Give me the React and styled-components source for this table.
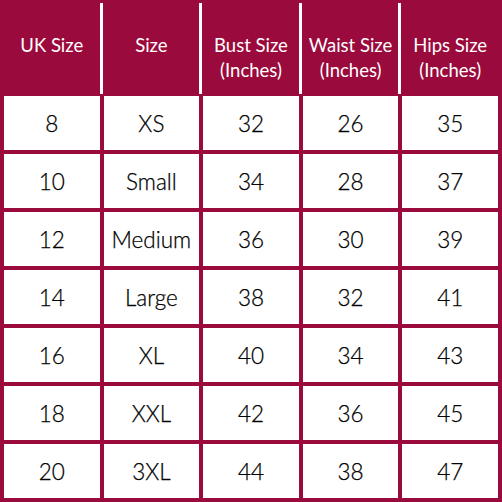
import React from "react";
import styled, { createGlobalStyle } from "styled-components";

const GlobalStyle = createGlobalStyle`
    html, body {
        margin: 0;
        padding: 0;
        background: #ffffff;
    }
    body {
        font-family: "Lato", "Open Sans", "Liberation Sans", sans-serif;
    }
`;

const Table = styled.div`
    width: 502px;
    height: 502px;
    box-sizing: border-box;
    background-color: #9b0a3c;
    padding: 0 4px 4px 4px;
    display: grid;
    grid-template-columns: repeat(5, 1fr);
    grid-template-rows: 92px repeat(7, 54px);
    gap: 4px;
`;

const HeadCell = styled.div`
    position: relative;
    color: #ffffff;
    font-size: 18.5px;
    line-height: 25px;
    text-align: center;
    padding-top: 33px;
    white-space: nowrap;

    &:not(:first-child)::before {
        content: "";
        position: absolute;
        left: -4px;
        top: 3px;
        bottom: -2px;
        width: 3px;
        background-color: #ffffff;
    }
`;

const Cell = styled.div`
    background-color: #ffffff;
    color: #000000;
    font-size: 22.5px;
    font-weight: 300;
    -webkit-text-stroke: 0.25px #000000;
    display: flex;
    align-items: center;
    justify-content: center;
`;

const headers = [
    ["UK Size"],
    ["Size"],
    ["Bust Size", "(Inches)"],
    ["Waist Size", "(Inches)"],
    ["Hips Size", "(Inches)"],
];

const rows = [
    ["8", "XS", "32", "26", "35"],
    ["10", "Small", "34", "28", "37"],
    ["12", "Medium", "36", "30", "39"],
    ["14", "Large", "38", "32", "41"],
    ["16", "XL", "40", "34", "43"],
    ["18", "XXL", "42", "36", "45"],
    ["20", "3XL", "44", "38", "47"],
];

const App = () => {
    return (
        <>
            <GlobalStyle />
            <Table>
                {headers.map((lines, i) => (
                    <HeadCell key={i}>
                        {lines.map((line) => (
                            <div key={line}>{line}</div>
                        ))}
                    </HeadCell>
                ))}
                {rows.map((row, r) =>
                    row.map((value, c) => <Cell key={`${r}-${c}`}>{value}</Cell>)
                )}
            </Table>
        </>
    );
};

export default App;
